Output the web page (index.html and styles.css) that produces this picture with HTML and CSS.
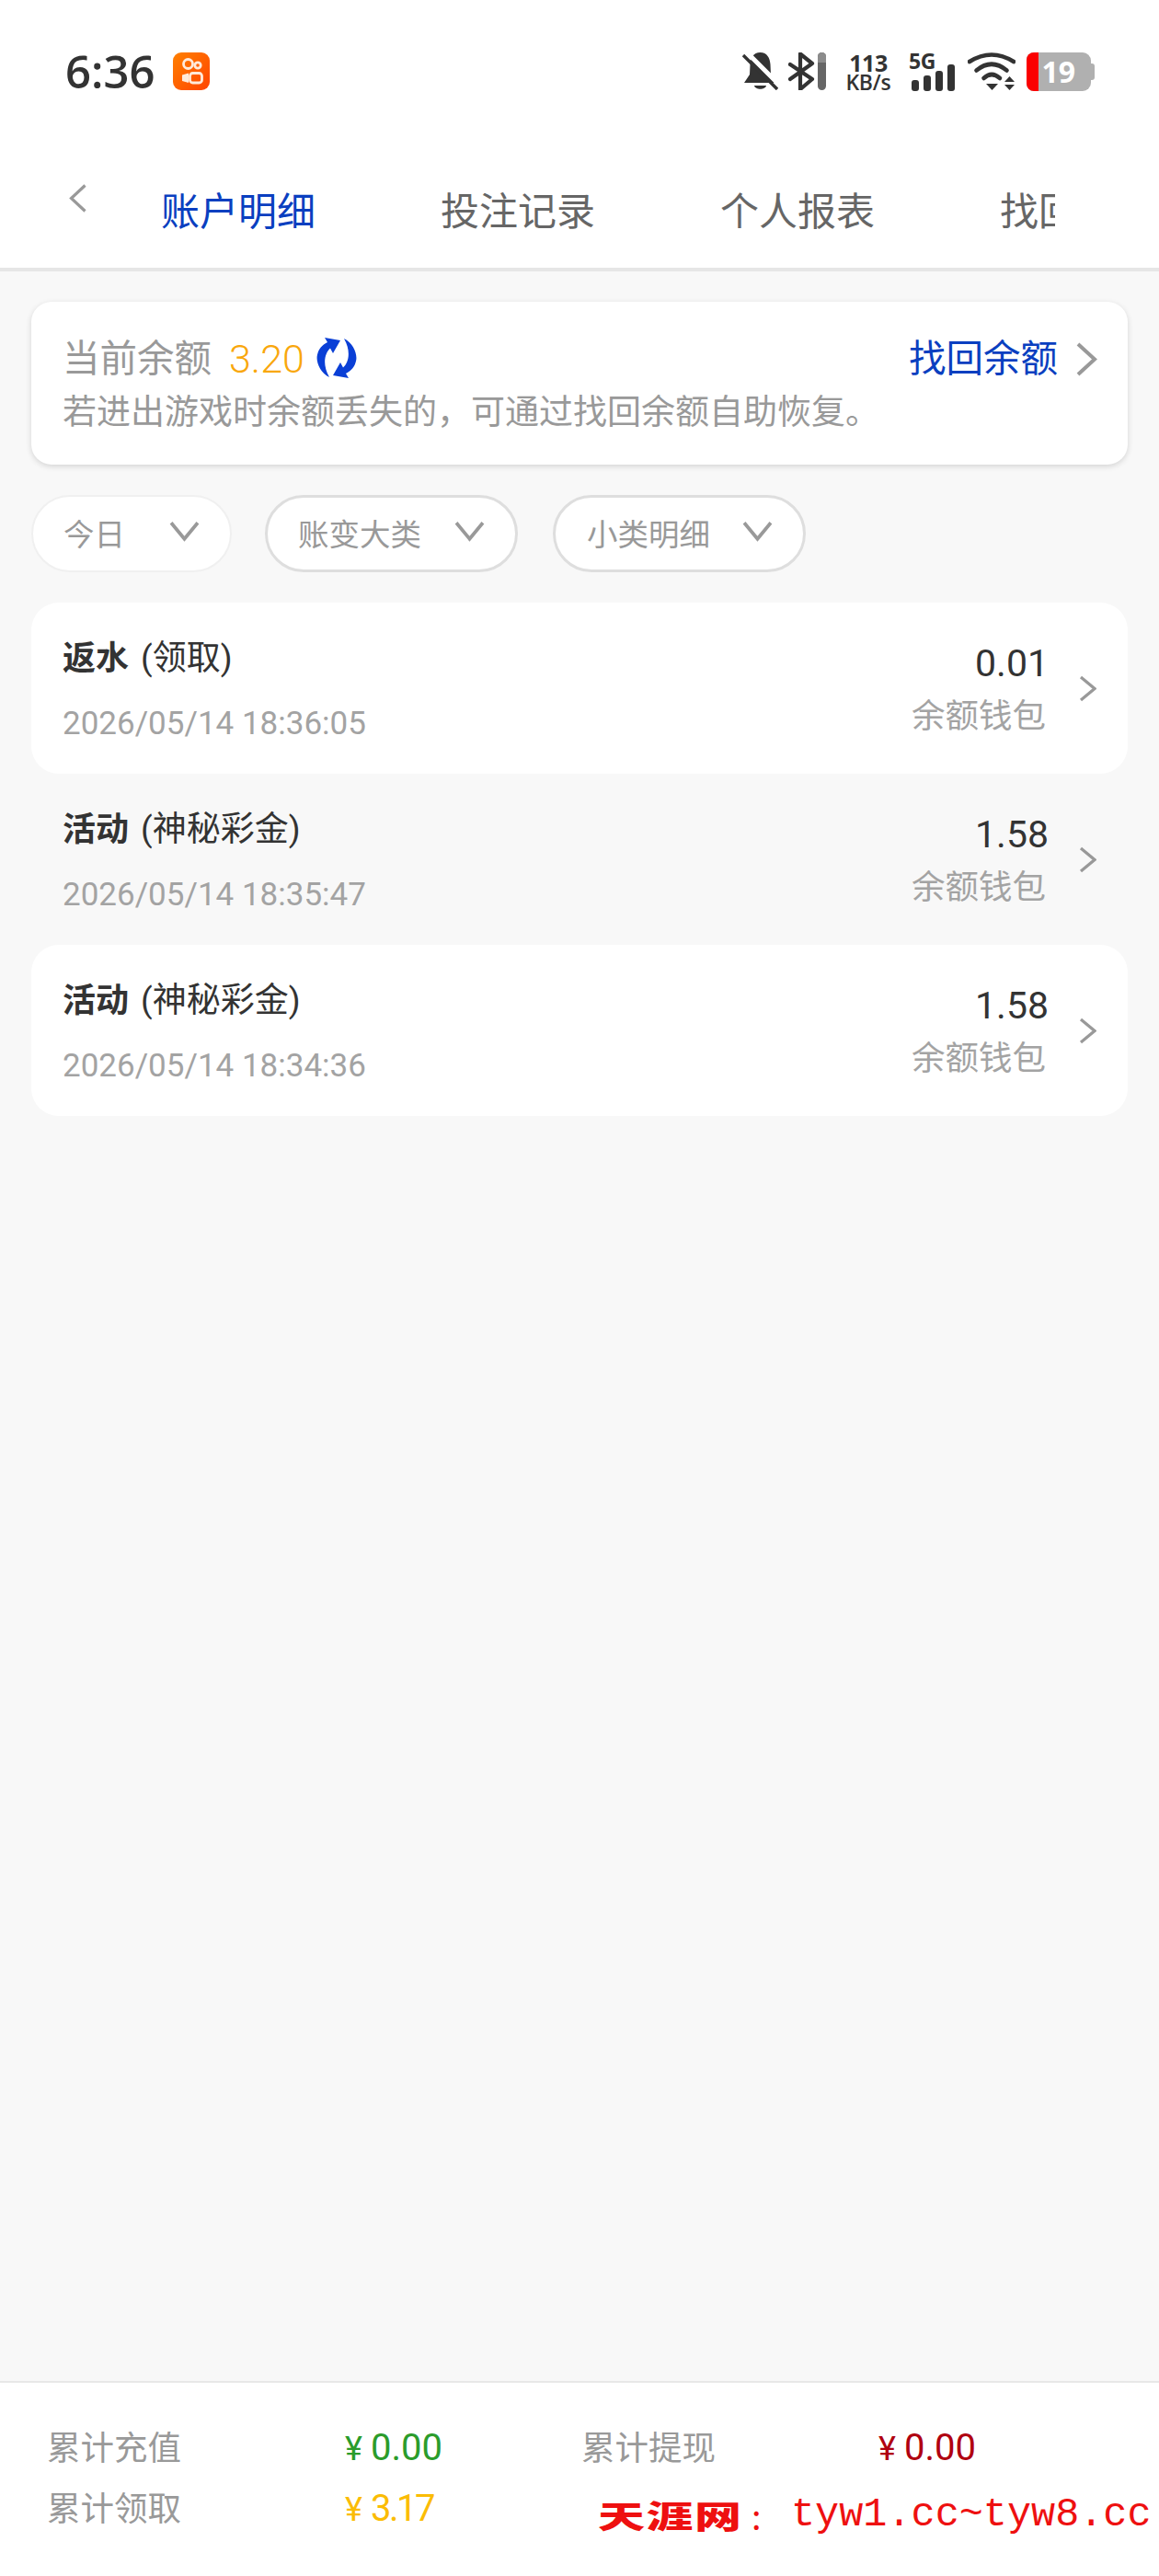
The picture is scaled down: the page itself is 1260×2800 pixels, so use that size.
FILE: index.html
```html
<!DOCTYPE html>
<html lang="zh-CN">
<head>
<meta charset="utf-8">
<title>账户明细</title>
<link rel="stylesheet" href="styles.css">
</head>
<body>
<div class="app">
  <header class="top">
    <div class="status">
      <div class="status-left">
        <span class="time">6:36</span>
        <svg class="app-icon" viewBox="0 0 40 41">
          <defs><linearGradient id="ks" x1="0" y1="0" x2="1" y2="1"><stop offset="0" stop-color="#ff8000"/><stop offset="1" stop-color="#ff4300"/></linearGradient></defs>
          <rect width="40" height="41" rx="9" fill="url(#ks)"/>
          <circle cx="16.5" cy="12.5" r="5" fill="none" stroke="#ffeadb" stroke-width="2.800"/>
          <circle cx="27" cy="14" r="3.200" fill="none" stroke="#ffeadb" stroke-width="2.800"/>
          <rect x="18.5" y="22.500" width="13" height="10.500" rx="3" fill="none" stroke="#ffeadb" stroke-width="2.800"/>
          <path d="M10 24.500L17 22.500V33L10 31Z" fill="#ffeadb"/>
        </svg>
      </div>
      <div class="status-right">
        <svg class="ic-bell" viewBox="0 0 39 41">
          <path d="M19.500 0C27 0 30 6 30.500 13L31 24L37 33H2L8 24L8.500 13C9 6 12 0 19.500 0Z" fill="#333"/>
          <path d="M13 36H26C25 41 14 41 13 36Z" fill="#333"/>
          <path d="M4 -1L42 37" stroke="#fff" stroke-width="5"/>
          <path d="M1 3L38 40" stroke="#333" stroke-width="3.400"/>
        </svg>
        <svg class="ic-bt" viewBox="0 0 42 41">
          <path d="M2 13L26 29L13 40V1.500L26 12L2 29" fill="none" stroke="#333" stroke-width="4.200" stroke-linejoin="round" stroke-linecap="round"/>
          <rect x="32" y="0" width="9" height="41" rx="4.500" fill="#666"/>
          <path d="M32 11V4.500A4.500 4.500 0 0 1 41 4.500V11Z" fill="#8c8c8c"/>
        </svg>
        <div class="speed"><span class="speed-num">113</span><span class="speed-unit">KB/s</span></div>
        <div class="signal">
          <span class="net">5G</span>
          <svg class="ic-bars" viewBox="0 0 47 29">
            <rect x="0" y="17" width="8" height="12" rx="3" fill="#333"/>
            <rect x="13" y="12" width="8" height="17" rx="3" fill="#333"/>
            <rect x="26" y="7" width="8" height="22" rx="3" fill="#333"/>
            <rect x="39" y="0" width="8" height="29" rx="3" fill="#333"/>
          </svg>
        </div>
        <svg class="ic-wifi" viewBox="0 0 52 41">
          <g fill="none" stroke="#333" stroke-width="4.600" stroke-linecap="round">
            <path d="M2 10Q26 -5 50 10"/>
            <path d="M9.500 19.500Q26 6 42.500 19.500"/>
            <path d="M17.500 28Q26 20 35 28"/>
          </g>
          <path d="M20 34H33L26.500 41Z" fill="#333"/>
          <path d="M40 32H51L45.500 26Z" fill="#333"/>
          <path d="M40 35H51L45.500 41Z" fill="#333"/>
        </svg>
        <div class="battery">
          <div class="battery-body"><span class="battery-low"></span><span class="battery-num">19</span></div>
          <span class="battery-cap"></span>
        </div>
      </div>
    </div>
    <nav class="nav">
      <svg class="back" viewBox="0 0 19 31"><path d="M17.500 1.500L2.500 15.500L17.500 29.500" fill="none" stroke="#999" stroke-width="3.200"/></svg>
      <div class="tabs">
        <span class="tab tab-on">账户明细</span>
        <span class="tab">投注记录</span>
        <span class="tab">个人报表</span>
        <span class="tab">找回余额</span>
      </div>
    </nav>
  </header>

  <main class="main">
    <section class="card">
      <div class="card-head">
        <div class="balance">
          <span class="balance-label">当前余额</span>
          <span class="balance-num">3.20</span>
          <svg class="refresh" viewBox="0 0 44 46">
            <path d="M9 1L26 4L18 18L15 12.500C9 18 6 30 14 44C4 39 -1 27 1 19.500C2.500 13 6 9 12 6Z" fill="#0a3fd6"/>
            <path d="M35 45L18 42L26 28L29 33.500C35 28 38 16 30 2C40 7 45 19 43 26.500C41.500 33 38 37 32 40Z" fill="#0a3fd6"/>
          </svg>
        </div>
        <a class="recover"><span>找回余额</span>
          <svg class="recover-arrow" viewBox="0 0 24 37"><path d="M3 2L21 18.500L3 35" fill="none" stroke="#999" stroke-width="4"/></svg>
        </a>
      </div>
      <p class="card-desc">若进出游戏时余额丢失的&#xFF0C;可通过找回余额自助恢复。</p>
    </section>

    <div class="filters">
      <div class="filter filter-a"><span>今日</span><svg class="caret" viewBox="0 0 32 22"><path d="M2 2L16 19L30 2" fill="none" stroke="#999" stroke-width="3.600"/></svg></div>
      <div class="filter filter-b"><span>账变大类</span><svg class="caret" viewBox="0 0 32 22"><path d="M2 2L16 19L30 2" fill="none" stroke="#999" stroke-width="3.600"/></svg></div>
      <div class="filter filter-c"><span>小类明细</span><svg class="caret" viewBox="0 0 32 22"><path d="M2 2L16 19L30 2" fill="none" stroke="#999" stroke-width="3.600"/></svg></div>
    </div>

    <ul class="list">
      <li class="row row-white">
        <div class="row-left"><div class="row-title"><b>返水</b><span class="row-sub">(领取)</span></div><div class="row-date">2026/05/14 18:36:05</div></div>
        <div class="row-right"><div class="row-amount">0.01</div><div class="row-wallet">余额钱包</div></div>
        <svg class="row-arrow" viewBox="0 0 19 29"><path d="M2 2L17 14.500L2 27" fill="none" stroke="#999" stroke-width="3.200"/></svg>
      </li>
      <li class="row">
        <div class="row-left"><div class="row-title"><b>活动</b><span class="row-sub">(神秘彩金)</span></div><div class="row-date">2026/05/14 18:35:47</div></div>
        <div class="row-right"><div class="row-amount">1.58</div><div class="row-wallet">余额钱包</div></div>
        <svg class="row-arrow" viewBox="0 0 19 29"><path d="M2 2L17 14.500L2 27" fill="none" stroke="#999" stroke-width="3.200"/></svg>
      </li>
      <li class="row row-white">
        <div class="row-left"><div class="row-title"><b>活动</b><span class="row-sub">(神秘彩金)</span></div><div class="row-date">2026/05/14 18:34:36</div></div>
        <div class="row-right"><div class="row-amount">1.58</div><div class="row-wallet">余额钱包</div></div>
        <svg class="row-arrow" viewBox="0 0 19 29"><path d="M2 2L17 14.500L2 27" fill="none" stroke="#999" stroke-width="3.200"/></svg>
      </li>
    </ul>
  </main>

  <footer class="totals">
    <span class="tot-label">累计充值</span>
    <span class="tot-val green"><i class="yen">¥</i>0.00</span>
    <span class="tot-label">累计提现</span>
    <span class="tot-val red"><i class="yen">¥</i>0.00</span>
    <span class="tot-label">累计领取</span>
    <span class="tot-val yellow"><i class="yen">¥</i>3.17</span>
    <div class="mark"><span class="mark-name">天涯网</span><span class="mark-colon">:</span><span class="mark-url">tyw1.cc~tyw8.cc</span></div>
  </footer>
</div>
</body>
</html>
```
FILE: styles.css
```css
* { box-sizing: border-box; }
html, body { margin: 0; padding: 0; }
body { font-family: Roboto, "Noto Sans CJK SC", sans-serif; color: #333; }
.app { width: 1260px; height: 2800px; display: flex; flex-direction: column; background: #f8f8f8; overflow: hidden; }

.top { height: 295px; background: #fff; border-bottom: 4px solid #e6e6e6; flex: none; }
.status { height: 180px; padding: 57px 70px 0 71px; display: flex; justify-content: space-between; align-items: flex-start; }
.status-left { display: flex; align-items: center; height: 41px; }
.time { font-family: "Open Sans", sans-serif; font-size: 49px; font-weight: 600; line-height: 41px; width: 117px; color: #333; }
.app-icon { width: 40px; height: 41px; }
.status-right { display: flex; align-items: flex-start; height: 42px; }
.ic-bell { width: 39px; height: 41px; margin-right: 11px; }
.ic-bt { width: 42px; height: 41px; margin-right: 20px; }
.speed { width: 50px; height: 42px; display: flex; flex-direction: column; align-items: center; font-family: "Open Sans", sans-serif; font-weight: 700; margin-right: 19px; }
.speed-num { font-size: 25px; line-height: 22px; letter-spacing: -0.5px; }
.speed-unit { font-size: 23px; line-height: 20px; font-weight: 600; white-space: nowrap; letter-spacing: -0.2px; }
.signal { width: 50px; height: 42px; position: relative; margin-right: 14px; display: flex; flex-direction: column; align-items: flex-end; padding-top: 13px; }
.net { position: absolute; left: 0; top: -1px; font-family: "Open Sans", sans-serif; font-size: 23px; line-height: 20px; font-weight: 700; letter-spacing: -0.5px; }
.ic-bars { width: 47px; height: 29px; }
.ic-wifi { width: 52px; height: 41px; margin-right: 12px; }
.battery { display: flex; align-items: center; height: 42px; }
.battery-body { position: relative; width: 70px; height: 42px; background: #b0b0b0; border-radius: 8px 9px 9px 8px; overflow: hidden; display: flex; align-items: center; justify-content: flex-end; padding-right: 17px; }
.battery-low { position: absolute; left: 0; top: 0; bottom: 0; width: 13px; background: #fb0000; }
.battery-num { font-family: "Open Sans", sans-serif; font-size: 32px; font-weight: 700; color: #fff; line-height: 42px; }
.battery-cap { width: 4px; height: 18px; background: #b0b0b0; border-radius: 0 3px 3px 0; }

.nav { display: flex; align-items: flex-start; padding-left: 75px; height: 111px; }
.back { width: 19px; height: 31px; margin-top: 20px; margin-right: 13px; flex: none; }
.tabs { width: 1040px; display: flex; overflow: hidden; }
.tab { flex: 0 0 304px; text-align: center; font-size: 42px; line-height: 102px; color: #666; white-space: nowrap; }
.tab-on { color: #0a3fc0; }

.main { flex: 1; padding: 33px 34px 0; display: flex; flex-direction: column; }
.card { height: 177px; background: #fff; border-radius: 22px; padding: 37px 36px 0 34px; box-shadow: 0 2px 6px rgba(0,0,0,.15); flex: none; }
.card-head { display: flex; justify-content: space-between; align-items: center; height: 50px; }
.balance { display: flex; align-items: center; }
.balance-label { font-size: 40.500px; line-height: 50px; color: #999; }
.balance-num { font-size: 43px; line-height: 50px; color: #f9a70c; margin-left: 19px; font-weight: 300; }
.refresh { width: 44px; height: 46px; margin-left: 13px; margin-top: -3px; }
.recover { display: flex; align-items: center; font-size: 40.500px; line-height: 50px; color: #0a3fc0; margin-right: -3px; }
.recover-arrow { width: 24px; height: 37px; margin-left: 19px; }
.card-desc { margin: 9px 0 0; font-size: 37px; line-height: 50px; color: #999; white-space: nowrap; }

.filters { display: flex; gap: 36px; margin-top: 33px; flex: none; }
.filter { height: 84px; border-radius: 42px; background: #fff; display: flex; align-items: center; justify-content: space-between; font-size: 33.500px; color: #999; }
.filter-a { width: 218px; border: 2px solid #f0f0f0; padding: 0 33px 4px 33px; }
.filter-b { width: 275px; border: 3px solid #dedede; padding: 0 33px 4px 33px; }
.filter-c { width: 275px; border: 3px solid #dedede; padding: 0 33px 4px 34px; margin-left: 2px; }
.caret { width: 33px; height: 23px; margin-top: -2px; }

.list { list-style: none; margin: 33px 0 0; padding: 0; }
.row { height: 186px; border-radius: 30px; padding: 0 34px 0 34px; display: flex; align-items: flex-start; }
.row-white { background: #fff; }
.row-left { flex: 1; padding-top: 36px; }
.row-title { font-size: 36px; line-height: 50px; color: #333; }
.row-title b { font-weight: 700; }
.row-sub { font-size: 37px; margin-left: 13px; }
.row-date { font-size: 35px; line-height: 50px; margin-top: 21px; color: #a3a3a3; }
.row-right { padding-top: 41px; text-align: right; margin-right: 36px; }
.row-amount { font-size: 41px; line-height: 50px; color: #333; margin-right: -3px; }
.row-wallet { font-size: 36.500px; line-height: 50px; margin-top: 8px; color: #a3a3a3; }
.row-arrow { width: 19px; height: 29px; margin-top: 79px; flex: none; }

.totals { position: relative; height: 212px; flex: none; background: #fff; border-top: 2px solid #e8e8e8; padding: 35px 0 0 51px; display: grid; grid-template-columns: 324px 257px 323px 1fr; grid-auto-rows: 66px; align-items: center; }
.tot-label { font-size: 36.500px; color: #999; }
.tot-val { font-size: 40px; font-weight: 400; padding-top: 5px; }
.yen { font-style: normal; margin-right: 9px; font-size: 36px; letter-spacing: 0; }
.green { color: #2b9c2b; }
.red { color: #b00010; }
.yellow { color: #fbbc05; letter-spacing: -2.500px; }
.mark { position: absolute; left: 650px; top: 118px; display: flex; align-items: center; height: 50px; color: #ee1010; }
.mark-name { display: inline-block; font-size: 34px; font-weight: 900; letter-spacing: 1px; width: 106px; transform: scaleX(1.5); transform-origin: left center; white-space: nowrap; font-family: "Noto Sans CJK SC", sans-serif; }
.mark-colon { width: 50px; margin-left: 61px; font-size: 38px; font-family: "Noto Sans CJK SC", sans-serif; }
.mark-url { font-family: "Liberation Mono", monospace; font-size: 43.500px; margin-left: -7px; }
```
